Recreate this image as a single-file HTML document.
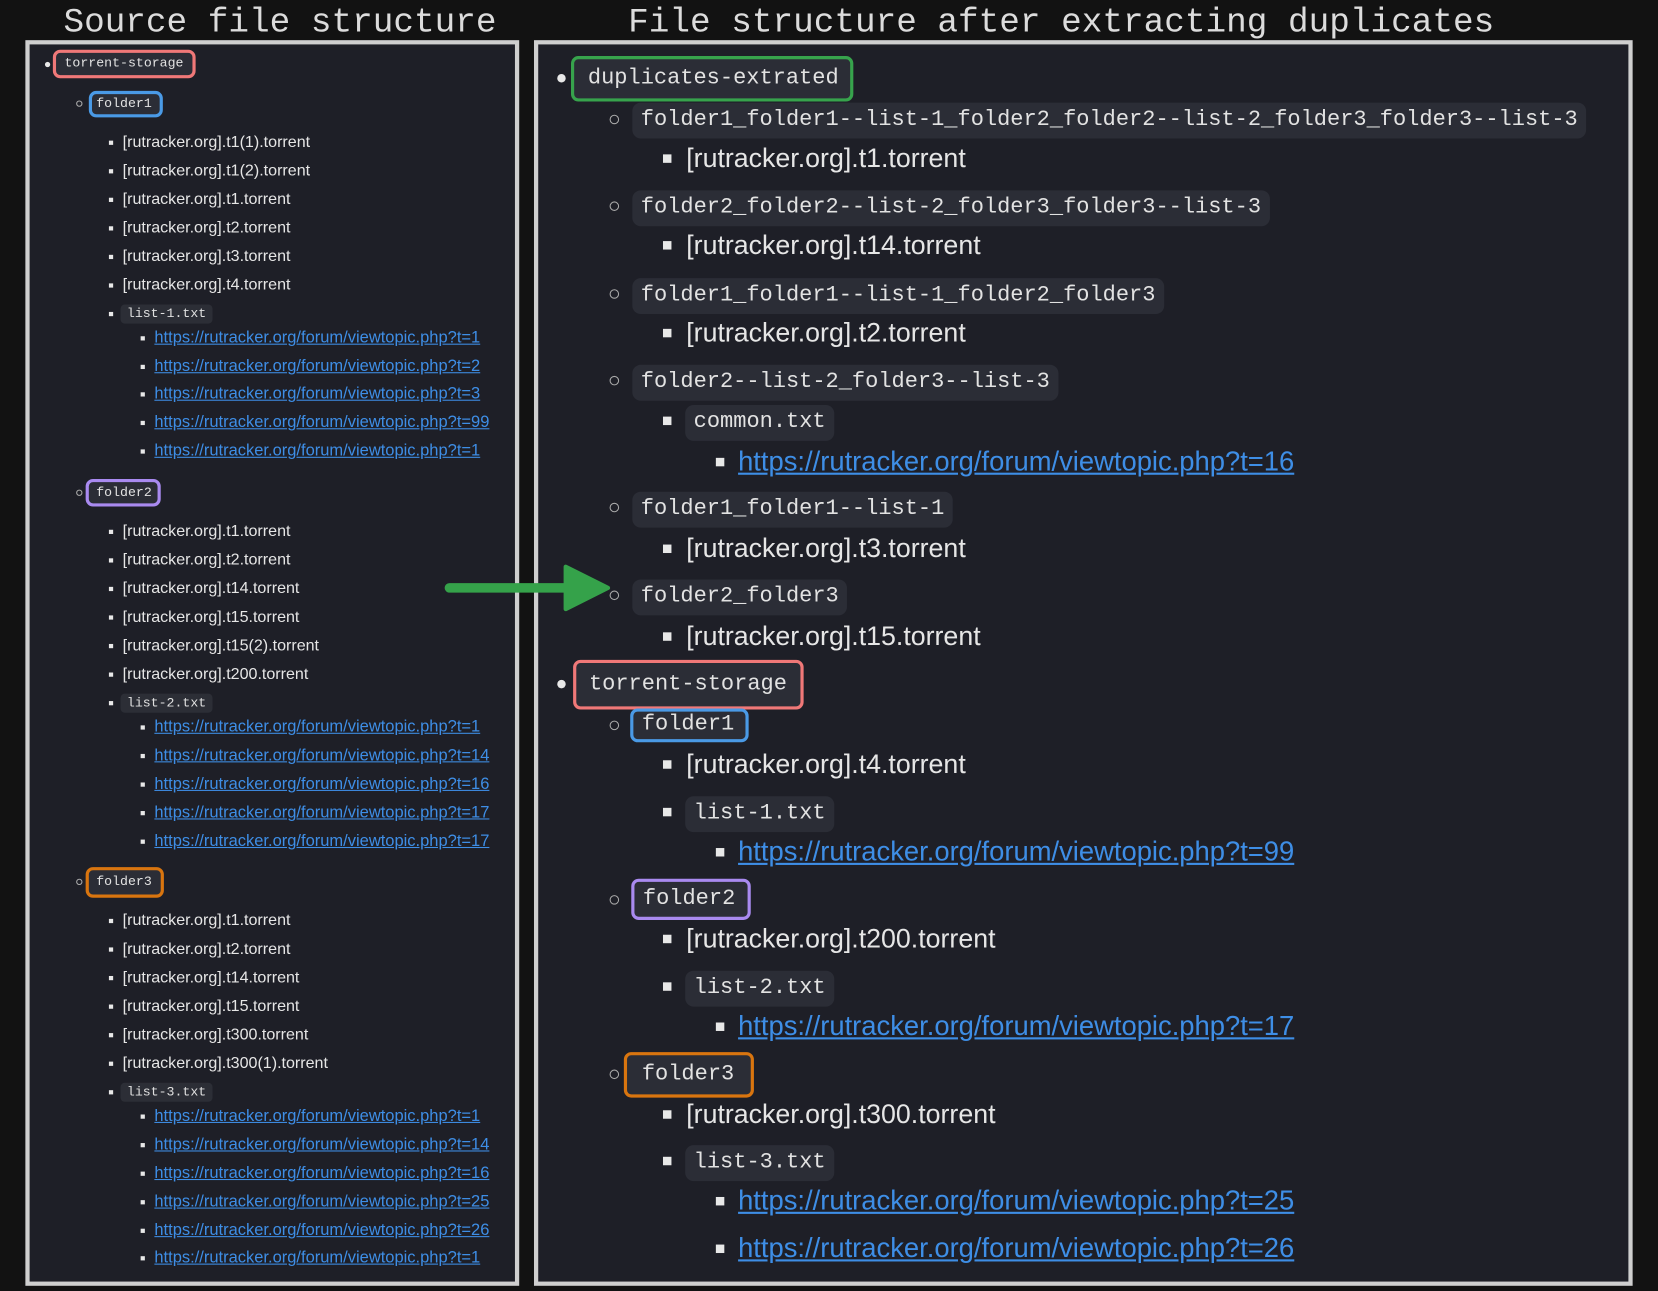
<!DOCTYPE html>
<html><head><meta charset="utf-8"><style>
html,body{margin:0;padding:0;background:#121212;width:1658px;height:1291px;overflow:hidden}
#w{position:absolute;left:0;top:0;width:1568px;height:1221px;transform:scale(1.05740);transform-origin:0 0}
.t{position:absolute;top:2px;font:32.5px/40px "Liberation Mono",monospace;color:#dcdcdc;white-space:nowrap}
.p{position:absolute;background:#1e1f27;border:4px solid #cfcfcf;box-sizing:border-box}
.r{position:absolute;white-space:nowrap;color:#e6e6e6}
.l{font:15.2px/20px "Liberation Sans",sans-serif}
.lk{color:#3e8ee6;text-decoration:underline;font-size:15.6px}
.lc{font:12.5px/18px "Liberation Mono",monospace;background:#2c2e36;padding:0 6px;border-radius:4px;color:#e0e0e0}
.R{font:25.3px/30px "Liberation Sans",sans-serif}
.rk{color:#3e8ee6;text-decoration:underline;font-size:25.9px}
.rc{font:20.8px/34px "Liberation Mono",monospace;background:#2b2d36;padding:0 8px;border-radius:8px;color:#e2e2e2}
.bx{position:absolute;border:3px solid;border-radius:7px;box-sizing:border-box;background:#2b2d36;color:#e2e2e2;white-space:nowrap;font-family:"Liberation Mono",monospace}
.b{position:absolute;transform:translate(-50%,-50%);background:#e8e8e8}
.bd{border-radius:50%}
.bc{border-radius:50%;background:none;border:1.5px solid #aaa;box-sizing:border-box}
</style></head><body><div id="w">
<div class="t" style="left:60px">Source file structure</div>
<div class="t" style="left:594px">File structure after extracting duplicates</div>
<div class="p" style="left:24px;top:38px;width:467px;height:1178px"></div>
<div class="p" style="left:505px;top:38px;width:1039px;height:1178px"></div>

<div class="b bd" style="left:45px;top:61px;width:5px;height:5px"></div>
<div class="bx" style="left:50px;top:47px;width:135px;height:27px;border-color:#f07878;font-size:12.5px;line-height:21px;padding-left:8px">torrent-storage</div>
<div class="b bc" style="left:75px;top:98px;width:6px;height:6px"></div>
<div class="bx" style="left:84px;top:86px;width:70px;height:25px;border-color:#4a9ae6;font-size:12.5px;line-height:19px;padding-left:4px">folder1</div>
<div class="b bc" style="left:75px;top:466px;width:6px;height:6px"></div>
<div class="bx" style="left:81px;top:453px;width:71px;height:26px;border-color:#a98af0;font-size:12.5px;line-height:20px;padding-left:7px">folder2</div>
<div class="b bc" style="left:75px;top:834px;width:6px;height:6px"></div>
<div class="bx" style="left:81px;top:820px;width:74px;height:29px;border-color:#d9750f;font-size:12.5px;line-height:23px;padding-left:7px">folder3</div>

<svg style="position:absolute;left:415px;top:530px" width="170" height="55"><line x1="10" y1="26" x2="130" y2="26" stroke="#35a24a" stroke-width="9" stroke-linecap="round"/><path d="M120 6 L160 26 L120 46 Z" fill="#35a24a" stroke="#35a24a" stroke-width="4" stroke-linejoin="round"/></svg>

<div class="b bd" style="left:531px;top:74px;width:8px;height:8px"></div>
<div class="bx" style="left:540px;top:53px;width:267px;height:43px;border-color:#37a34c;font-size:20.8px;line-height:37px;padding-left:13px">duplicates-extrated</div>
<div class="b bd" style="left:531px;top:647px;width:8px;height:8px"></div>
<div class="bx" style="left:542px;top:624px;width:218px;height:47px;border-color:#f07878;font-size:20.8px;line-height:41px;padding-left:12px">torrent-storage</div>
<div class="bx" style="left:596px;top:670px;width:112px;height:32px;border-color:#4a9ae6;font-size:20.8px;line-height:26px;padding-left:8px">folder1</div>
<div class="bx" style="left:597px;top:831px;width:113px;height:39px;border-color:#a98af0;font-size:20.8px;line-height:33px;padding-left:8px">folder2</div>
<div class="bx" style="left:590px;top:995px;width:123px;height:43px;border-color:#d9750f;font-size:20.8px;line-height:37px;padding-left:14px">folder3</div>

<div class="b" style="left:105px;top:135px;width:4px;height:4px"></div><div class="r l" style="left:116px;top:125px">[rutracker.org].t1(1).torrent</div>
<div class="b" style="left:105px;top:162px;width:4px;height:4px"></div><div class="r l" style="left:116px;top:152px">[rutracker.org].t1(2).torrent</div>
<div class="b" style="left:105px;top:189px;width:4px;height:4px"></div><div class="r l" style="left:116px;top:179px">[rutracker.org].t1.torrent</div>
<div class="b" style="left:105px;top:216px;width:4px;height:4px"></div><div class="r l" style="left:116px;top:206px">[rutracker.org].t2.torrent</div>
<div class="b" style="left:105px;top:243px;width:4px;height:4px"></div><div class="r l" style="left:116px;top:233px">[rutracker.org].t3.torrent</div>
<div class="b" style="left:105px;top:270px;width:4px;height:4px"></div><div class="r l" style="left:116px;top:260px">[rutracker.org].t4.torrent</div>
<div class="b" style="left:105px;top:297px;width:4px;height:4px"></div><div class="r lc" style="left:114px;top:288px">list-1.txt</div>
<div class="b" style="left:135px;top:320px;width:4px;height:4px"></div><div class="r l lk" style="left:146px;top:310px">https://rutracker.org/forum/viewtopic.php?t=1</div>
<div class="b" style="left:135px;top:347px;width:4px;height:4px"></div><div class="r l lk" style="left:146px;top:337px">https://rutracker.org/forum/viewtopic.php?t=2</div>
<div class="b" style="left:135px;top:373px;width:4px;height:4px"></div><div class="r l lk" style="left:146px;top:363px">https://rutracker.org/forum/viewtopic.php?t=3</div>
<div class="b" style="left:135px;top:400px;width:4px;height:4px"></div><div class="r l lk" style="left:146px;top:390px">https://rutracker.org/forum/viewtopic.php?t=99</div>
<div class="b" style="left:135px;top:427px;width:4px;height:4px"></div><div class="r l lk" style="left:146px;top:417px">https://rutracker.org/forum/viewtopic.php?t=1</div>

<div class="b" style="left:105px;top:503px;width:4px;height:4px"></div><div class="r l" style="left:116px;top:493px">[rutracker.org].t1.torrent</div>
<div class="b" style="left:105px;top:530px;width:4px;height:4px"></div><div class="r l" style="left:116px;top:520px">[rutracker.org].t2.torrent</div>
<div class="b" style="left:105px;top:557px;width:4px;height:4px"></div><div class="r l" style="left:116px;top:547px">[rutracker.org].t14.torrent</div>
<div class="b" style="left:105px;top:584px;width:4px;height:4px"></div><div class="r l" style="left:116px;top:574px">[rutracker.org].t15.torrent</div>
<div class="b" style="left:105px;top:611px;width:4px;height:4px"></div><div class="r l" style="left:116px;top:601px">[rutracker.org].t15(2).torrent</div>
<div class="b" style="left:105px;top:638px;width:4px;height:4px"></div><div class="r l" style="left:116px;top:628px">[rutracker.org].t200.torrent</div>
<div class="b" style="left:105px;top:665px;width:4px;height:4px"></div><div class="r lc" style="left:114px;top:656px">list-2.txt</div>
<div class="b" style="left:135px;top:688px;width:4px;height:4px"></div><div class="r l lk" style="left:146px;top:678px">https://rutracker.org/forum/viewtopic.php?t=1</div>
<div class="b" style="left:135px;top:715px;width:4px;height:4px"></div><div class="r l lk" style="left:146px;top:705px">https://rutracker.org/forum/viewtopic.php?t=14</div>
<div class="b" style="left:135px;top:742px;width:4px;height:4px"></div><div class="r l lk" style="left:146px;top:732px">https://rutracker.org/forum/viewtopic.php?t=16</div>
<div class="b" style="left:135px;top:769px;width:4px;height:4px"></div><div class="r l lk" style="left:146px;top:759px">https://rutracker.org/forum/viewtopic.php?t=17</div>
<div class="b" style="left:135px;top:796px;width:4px;height:4px"></div><div class="r l lk" style="left:146px;top:786px">https://rutracker.org/forum/viewtopic.php?t=17</div>

<div class="b" style="left:105px;top:871px;width:4px;height:4px"></div><div class="r l" style="left:116px;top:861px">[rutracker.org].t1.torrent</div>
<div class="b" style="left:105px;top:898px;width:4px;height:4px"></div><div class="r l" style="left:116px;top:888px">[rutracker.org].t2.torrent</div>
<div class="b" style="left:105px;top:925px;width:4px;height:4px"></div><div class="r l" style="left:116px;top:915px">[rutracker.org].t14.torrent</div>
<div class="b" style="left:105px;top:952px;width:4px;height:4px"></div><div class="r l" style="left:116px;top:942px">[rutracker.org].t15.torrent</div>
<div class="b" style="left:105px;top:979px;width:4px;height:4px"></div><div class="r l" style="left:116px;top:969px">[rutracker.org].t300.torrent</div>
<div class="b" style="left:105px;top:1006px;width:4px;height:4px"></div><div class="r l" style="left:116px;top:996px">[rutracker.org].t300(1).torrent</div>
<div class="b" style="left:105px;top:1033px;width:4px;height:4px"></div><div class="r lc" style="left:114px;top:1024px">list-3.txt</div>
<div class="b" style="left:135px;top:1056px;width:4px;height:4px"></div><div class="r l lk" style="left:146px;top:1046px">https://rutracker.org/forum/viewtopic.php?t=1</div>
<div class="b" style="left:135px;top:1083px;width:4px;height:4px"></div><div class="r l lk" style="left:146px;top:1073px">https://rutracker.org/forum/viewtopic.php?t=14</div>
<div class="b" style="left:135px;top:1110px;width:4px;height:4px"></div><div class="r l lk" style="left:146px;top:1100px">https://rutracker.org/forum/viewtopic.php?t=16</div>
<div class="b" style="left:135px;top:1137px;width:4px;height:4px"></div><div class="r l lk" style="left:146px;top:1127px">https://rutracker.org/forum/viewtopic.php?t=25</div>
<div class="b" style="left:135px;top:1164px;width:4px;height:4px"></div><div class="r l lk" style="left:146px;top:1154px">https://rutracker.org/forum/viewtopic.php?t=26</div>
<div class="b" style="left:135px;top:1190px;width:4px;height:4px"></div><div class="r l lk" style="left:146px;top:1180px">https://rutracker.org/forum/viewtopic.php?t=1</div>

<div class="b bc" style="left:581px;top:113px;width:9px;height:9px"></div><div class="r rc" style="left:598px;top:97px">folder1_folder1--list-1_folder2_folder2--list-2_folder3_folder3--list-3</div>
<div class="b" style="left:631px;top:150px;width:8px;height:8px"></div><div class="r R" style="left:649px;top:135px">[rutracker.org].t1.torrent</div>
<div class="b bc" style="left:581px;top:195px;width:9px;height:9px"></div><div class="r rc" style="left:598px;top:180px">folder2_folder2--list-2_folder3_folder3--list-3</div>
<div class="b" style="left:631px;top:232px;width:8px;height:8px"></div><div class="r R" style="left:649px;top:217px">[rutracker.org].t14.torrent</div>
<div class="b bc" style="left:581px;top:278px;width:9px;height:9px"></div><div class="r rc" style="left:598px;top:263px">folder1_folder1--list-1_folder2_folder3</div>
<div class="b" style="left:631px;top:315px;width:8px;height:8px"></div><div class="r R" style="left:649px;top:300px">[rutracker.org].t2.torrent</div>
<div class="b bc" style="left:581px;top:360px;width:9px;height:9px"></div><div class="r rc" style="left:598px;top:345px">folder2--list-2_folder3--list-3</div>
<div class="b" style="left:631px;top:398px;width:8px;height:8px"></div><div class="r rc" style="left:648px;top:383px">common.txt</div>
<div class="b" style="left:681px;top:437px;width:8px;height:8px"></div><div class="r R rk" style="left:698px;top:422px">https://rutracker.org/forum/viewtopic.php?t=16</div>
<div class="b bc" style="left:581px;top:480px;width:9px;height:9px"></div><div class="r rc" style="left:598px;top:465px">folder1_folder1--list-1</div>
<div class="b" style="left:631px;top:519px;width:8px;height:8px"></div><div class="r R" style="left:649px;top:504px">[rutracker.org].t3.torrent</div>
<div class="b bc" style="left:581px;top:563px;width:9px;height:9px"></div><div class="r rc" style="left:598px;top:548px">folder2_folder3</div>
<div class="b" style="left:631px;top:602px;width:8px;height:8px"></div><div class="r R" style="left:649px;top:587px">[rutracker.org].t15.torrent</div>

<div class="b bc" style="left:581px;top:686px;width:9px;height:9px"></div>
<div class="b" style="left:631px;top:723px;width:8px;height:8px"></div><div class="r R" style="left:649px;top:708px">[rutracker.org].t4.torrent</div>
<div class="b" style="left:631px;top:768px;width:8px;height:8px"></div><div class="r rc" style="left:648px;top:753px">list-1.txt</div>
<div class="b" style="left:681px;top:806px;width:8px;height:8px"></div><div class="r R rk" style="left:698px;top:791px">https://rutracker.org/forum/viewtopic.php?t=99</div>
<div class="b bc" style="left:581px;top:851px;width:9px;height:9px"></div>
<div class="b" style="left:631px;top:888px;width:8px;height:8px"></div><div class="r R" style="left:649px;top:873px">[rutracker.org].t200.torrent</div>
<div class="b" style="left:631px;top:933px;width:8px;height:8px"></div><div class="r rc" style="left:648px;top:918px">list-2.txt</div>
<div class="b" style="left:681px;top:971px;width:8px;height:8px"></div><div class="r R rk" style="left:698px;top:956px">https://rutracker.org/forum/viewtopic.php?t=17</div>
<div class="b bc" style="left:581px;top:1016px;width:9px;height:9px"></div>
<div class="b" style="left:631px;top:1054px;width:8px;height:8px"></div><div class="r R" style="left:649px;top:1039px">[rutracker.org].t300.torrent</div>
<div class="b" style="left:631px;top:1098px;width:8px;height:8px"></div><div class="r rc" style="left:648px;top:1083px">list-3.txt</div>
<div class="b" style="left:681px;top:1136px;width:8px;height:8px"></div><div class="r R rk" style="left:698px;top:1121px">https://rutracker.org/forum/viewtopic.php?t=25</div>
<div class="b" style="left:681px;top:1181px;width:8px;height:8px"></div><div class="r R rk" style="left:698px;top:1166px">https://rutracker.org/forum/viewtopic.php?t=26</div>
</div></body></html>
